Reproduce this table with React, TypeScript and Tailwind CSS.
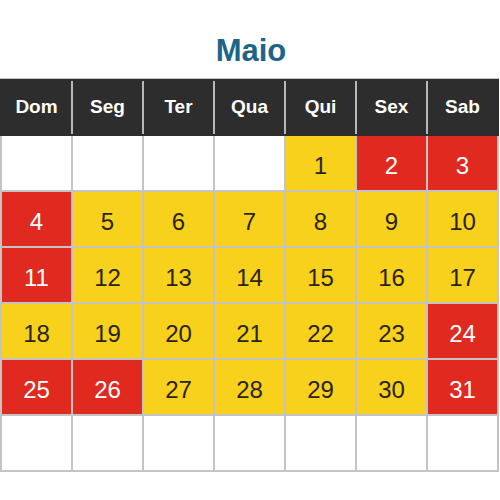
import React from "react";

const days = ["Dom", "Seg", "Ter", "Qua", "Qui", "Sex", "Sab"];
const red = new Set([2, 3, 4, 11, 24, 25, 26, 31]);

export default function App() {
  const cells: (number | null)[] = [];
  for (let i = 0; i < 4; i++) cells.push(null);
  for (let d = 1; d <= 31; d++) cells.push(d);
  while (cells.length < 42) cells.push(null);

  return (
    <div
      className="w-[500px] h-[500px] bg-white"
      style={{ fontFamily: '"Liberation Sans", Arial, sans-serif' }}
    >
      <div className="h-[78px] pt-[35px] flex justify-center">
        <div className="text-[31px] leading-none font-bold text-[#1d6587] pl-[2px]">
          Maio
        </div>
      </div>
      <div className="w-[499px] bg-[#c4c4c4] px-[2px] pb-[2px] pt-[1px]">
        <div className="bg-[#2d2d2d] py-[2px] -mx-[2px] px-[2px]">
          <div className="grid grid-cols-7 gap-x-[2px] bg-[#b8b8b8] h-[53px]">
            {days.map((d) => (
              <div
                key={d}
                className="bg-[#2d2d2d] flex items-center justify-center text-white font-bold text-[19px]"
              >
                {d}
              </div>
            ))}
          </div>
        </div>
        <div className="grid grid-cols-7 gap-[2px]">
          {cells.map((c, i) => {
            let cls = "bg-white";
            if (c !== null) {
              cls = red.has(c)
                ? "bg-[#e0291f] text-white"
                : "bg-[#f8d11c] text-[#2a2418]";
            }
            return (
              <div
                key={i}
                className={`h-[54px] flex items-center justify-center pt-[5px] text-[24px] ${cls}`}
              >
                {c ?? ""}
              </div>
            );
          })}
        </div>
      </div>
    </div>
  );
}
